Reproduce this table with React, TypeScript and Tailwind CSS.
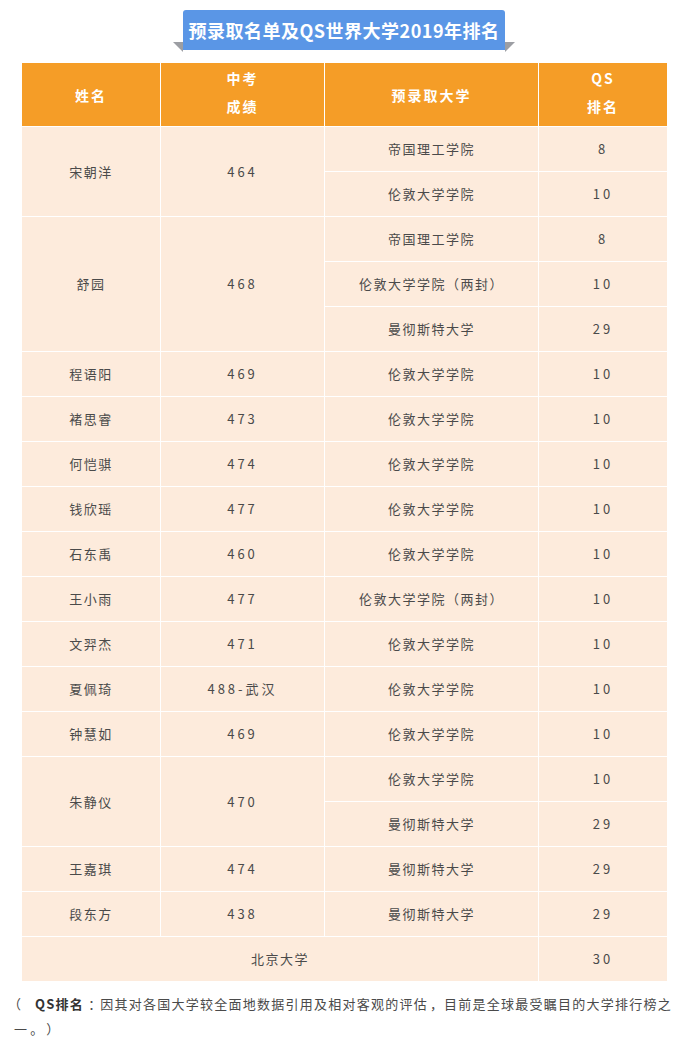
import React from "react";

type Row = { name?: string; nameSpan?: number; score?: string; uni: string; qs: string };

const rows: Row[] = [
  { name: "宋朝洋", nameSpan: 2, score: "464", uni: "帝国理工学院", qs: "8" },
  { uni: "伦敦大学学院", qs: "10" },
  { name: "舒园", nameSpan: 3, score: "468", uni: "帝国理工学院", qs: "8" },
  { uni: "伦敦大学学院（两封）", qs: "10" },
  { uni: "曼彻斯特大学", qs: "29" },
  { name: "程语阳", nameSpan: 1, score: "469", uni: "伦敦大学学院", qs: "10" },
  { name: "褚思睿", nameSpan: 1, score: "473", uni: "伦敦大学学院", qs: "10" },
  { name: "何恺骐", nameSpan: 1, score: "474", uni: "伦敦大学学院", qs: "10" },
  { name: "钱欣瑶", nameSpan: 1, score: "477", uni: "伦敦大学学院", qs: "10" },
  { name: "石东禹", nameSpan: 1, score: "460", uni: "伦敦大学学院", qs: "10" },
  { name: "王小雨", nameSpan: 1, score: "477", uni: "伦敦大学学院（两封）", qs: "10" },
  { name: "文羿杰", nameSpan: 1, score: "471", uni: "伦敦大学学院", qs: "10" },
  { name: "夏佩琦", nameSpan: 1, score: "488-武汉", uni: "伦敦大学学院", qs: "10" },
  { name: "钟慧如", nameSpan: 1, score: "469", uni: "伦敦大学学院", qs: "10" },
  { name: "朱静仪", nameSpan: 2, score: "470", uni: "伦敦大学学院", qs: "10" },
  { uni: "曼彻斯特大学", qs: "29" },
  { name: "王嘉琪", nameSpan: 1, score: "474", uni: "曼彻斯特大学", qs: "29" },
  { name: "段东方", nameSpan: 1, score: "438", uni: "曼彻斯特大学", qs: "29" },
];

const font = { fontFamily: '"Noto Sans CJK SC", "Noto Sans", sans-serif' };

const td = "border border-white text-center align-middle text-[13px] text-[#4a4a4a] p-0";
const th = "border border-white text-[14px] font-bold text-white tracking-[2px] p-0";

function P({ c, w = "w-[14px]", pad = "" }: { c: string; w?: string; pad?: string }) {
  return <span className={`inline-block ${w} ${pad} tracking-normal text-left`}>{c}</span>;
}

export default function App() {
  return (
    <div className="w-[692px] bg-white" style={font}>
      <div className="flex justify-center pt-[10px]">
        <div className="relative ml-[-4px] h-[40px] w-[322px] rounded-t-[3px] bg-[#5a96e6] flex items-center justify-center">
          <span className="text-[18px] font-bold text-white tracking-[0.5px]">预录取名单及QS世界大学2019年排名</span>
          <div className="absolute left-[-10px] top-[32px] h-[10px] w-[10px] bg-[#9c9ea3] [clip-path:polygon(0_0,100%_0,100%_100%)]" />
          <div className="absolute right-[-10px] top-[32px] h-[10px] w-[10px] bg-[#9c9ea3] [clip-path:polygon(0_0,100%_0,0_100%)]" />
        </div>
      </div>
      <div className="pt-[12px] pl-[21px]">
        <table className="w-[646px] border-collapse table-fixed">
          <colgroup>
            <col className="w-[139px]" />
            <col className="w-[164px]" />
            <col className="w-[214px]" />
            <col className="w-[129px]" />
          </colgroup>
          <thead>
            <tr className="h-[64px] bg-[#f59d27]">
              <th className={`${th} leading-[28px]`}>姓名</th>
              <th className={`${th} leading-[28px] pb-[6px]`}>
                中考
                <br />
                成绩
              </th>
              <th className={`${th} leading-[28px]`}>预录取大学</th>
              <th className={`${th} leading-[28px] pb-[6px]`}>
                QS
                <br />
                排名
              </th>
            </tr>
          </thead>
          <tbody>
            {rows.map((r, i) => (
              <tr key={i} className="h-[45px] bg-[#fdebdc]">
                {r.name !== undefined && (
                  <td rowSpan={r.nameSpan} className={`${td} tracking-[1.5px]`}>
                    {r.name}
                  </td>
                )}
                {r.score !== undefined && (
                  <td rowSpan={r.nameSpan} className={`${td} tracking-[3px]`}>
                    {r.score}
                  </td>
                )}
                <td className={`${td} tracking-[1.5px]`}>{r.uni}</td>
                <td className={`${td} tracking-[3px]`}>{r.qs}</td>
              </tr>
            ))}
            <tr className="h-[45px] bg-[#fdebdc]">
              <td colSpan={3} className={`${td} tracking-[1.5px]`}>
                北京大学
              </td>
              <td className={`${td} tracking-[3px]`}>30</td>
            </tr>
          </tbody>
        </table>
      </div>
      <p className="mt-[9px] px-[14px] text-[13px] leading-[25px] tracking-[1.25px] text-[#4a4a4a]">
        <span className="inline-block w-[21px] tracking-normal">
          <span className="inline-block ml-[-6px]">（</span>
        </span>
        <strong className="font-bold text-[#333]">QS排名</strong>
        <P c="：" w="w-[16px]" pad="pl-[4px]" />
        因其对各国大学较全面地数据引用及相对客观的评估
        <P c="，" w="w-[16px]" pad="pl-[2px]" />
        目前是全球最受瞩目的大学排行榜之一
        <P c="。" w="w-[16px]" pad="pl-[2px]" />
        <P c="）" w="w-[16px]" pad="pl-[2px]" />
      </p>
    </div>
  );
}
